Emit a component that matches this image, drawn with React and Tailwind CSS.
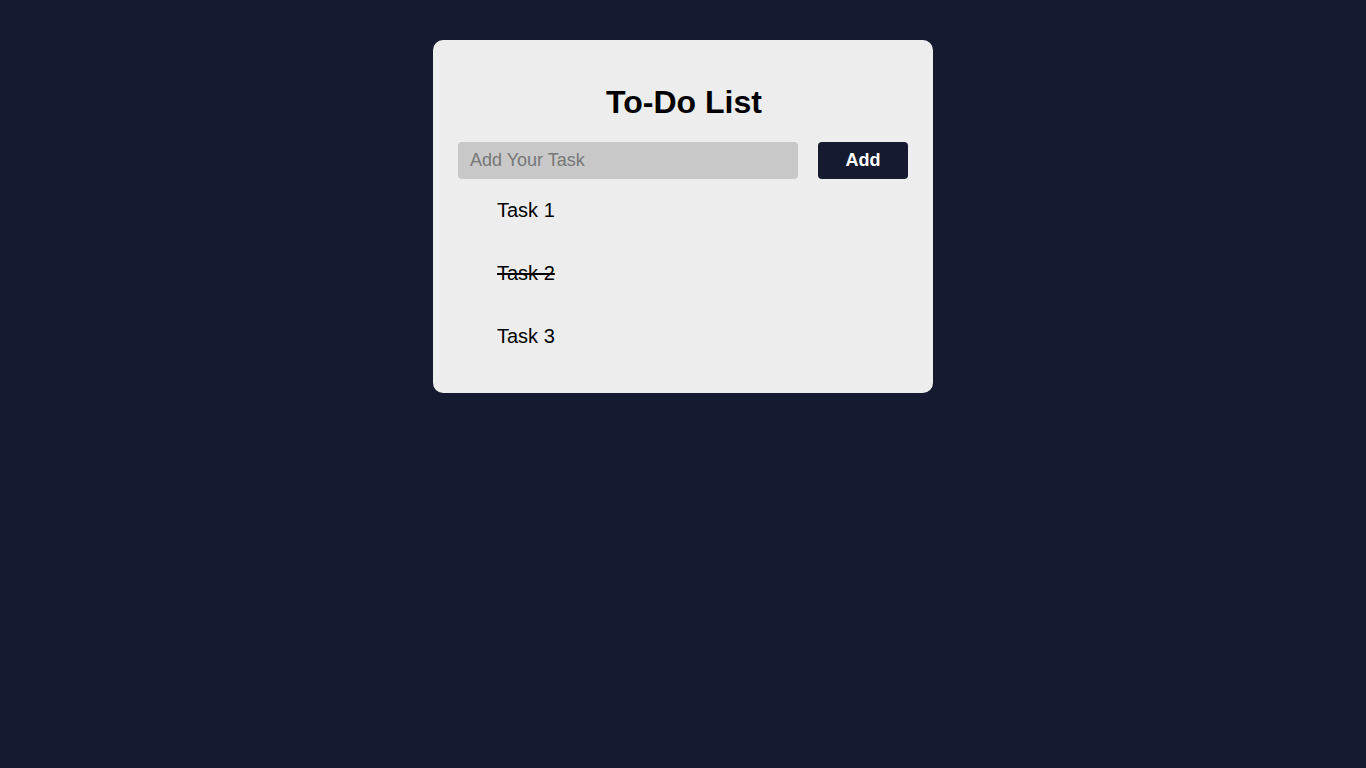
import React, { useState } from "react";

export default function App() {
  const [tasks] = useState([
    { text: "Task 1", done: false },
    { text: "Task 2", done: true },
    { text: "Task 3", done: false },
  ]);
  return (
    <div
      className="min-h-screen w-full bg-[#161a30] flex justify-center pt-[40px]"
      style={{ fontFamily: '"Liberation Sans", Arial, sans-serif' }}
    >
      <div className="w-[500px] h-fit bg-[#ededed] rounded-[10px] px-[25px] pt-[44px] pb-[25px]">
        <h1 className="text-[32px] leading-[37px] font-bold text-black text-center mb-[21px] pl-[2px]">
          To-Do List
        </h1>
        <div className="flex gap-[20px]">
          <input
            type="text"
            placeholder="Add Your Task"
            className="w-[340px] h-[37px] bg-[#c8c8c8] rounded-[4px] px-[12px] text-[18px] text-black placeholder:text-[#777777] outline-none"
          />
          <button className="w-[90px] h-[37px] bg-[#161a30] rounded-[4px] text-white font-bold text-[18px]">
            Add
          </button>
        </div>
        <ul className="pl-[39px]">
          {tasks.map((t, i) => (
            <li
              key={i}
              className={`text-[20px] leading-[23px] pt-[20px] pb-[20px] text-black ${
                t.done ? "line-through" : ""
              }`}
            >
              {t.text}
            </li>
          ))}
        </ul>
      </div>
    </div>
  );
}
